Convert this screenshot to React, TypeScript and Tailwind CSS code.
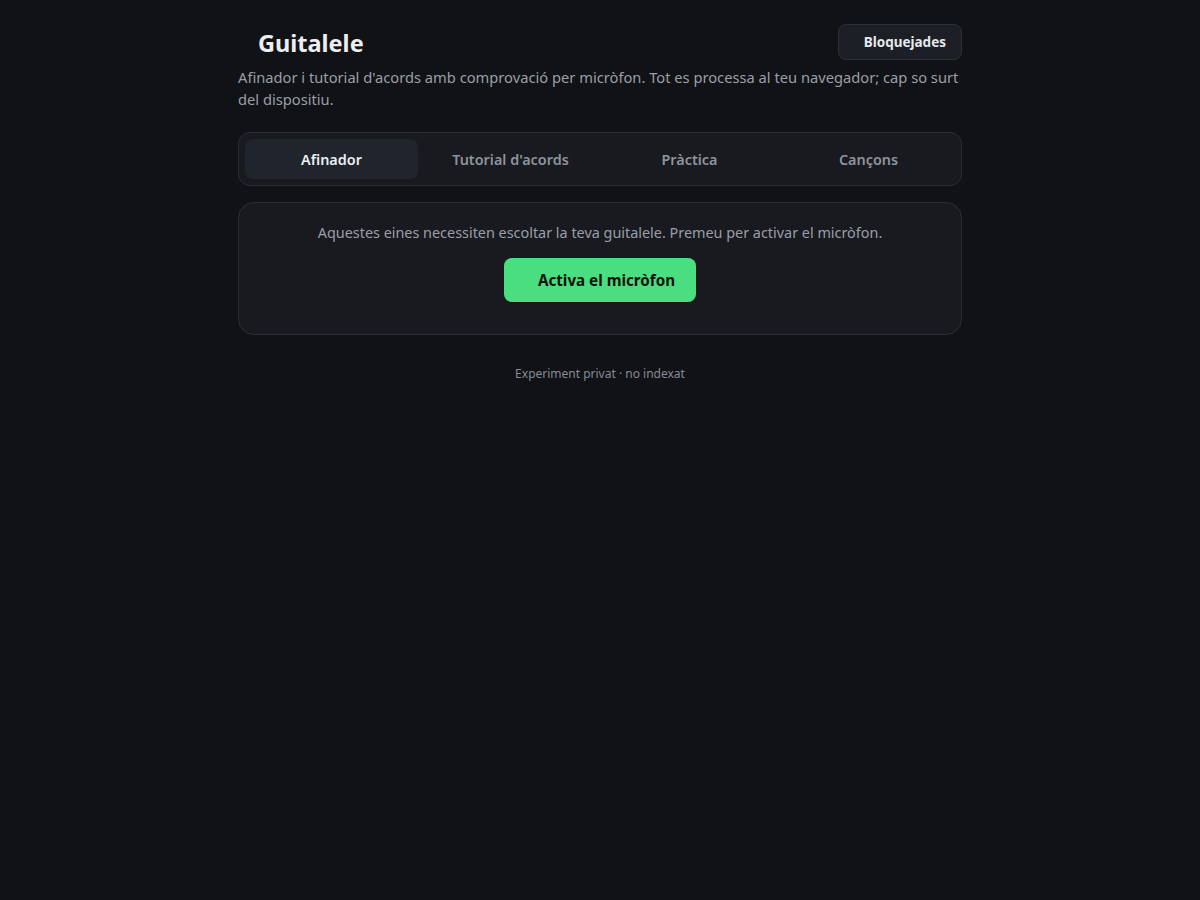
import React, { useState } from "react";

const tabs = ["Afinador", "Tutorial d'acords", "Pràctica", "Cançons"];

export default function App() {
    const [active, setActive] = useState(0);

    return (
        <div
            className="min-h-screen bg-[#111216] text-gray-100"
            style={{ fontFamily: '"Noto Sans", "Open Sans", sans-serif' }}
        >
            <div className="mx-auto w-[724px] pt-6">
                <header className="flex items-center justify-between h-9">
                    <h1 className="mt-[3px] flex items-center text-[23.5px] font-bold text-[#eceef2]">
                        <span className="w-5" />
                        Guitalele
                    </h1>
                    <button className="h-9 flex items-center rounded-lg border border-[#2c3039] bg-[#1c1f26] pl-[25px] pr-[15px] text-[13.5px] font-bold text-[#e6e8ec]">
                        Bloquejades
                    </button>
                </header>
                <p className="mt-1.5 text-[14.7px] leading-[22px] text-[#9a9fa8]">
                    Afinador i tutorial d'acords amb comprovació per micròfon. Tot es processa al teu navegador; cap so surt del dispositiu.
                </p>

                <nav className="mt-[22px] grid grid-cols-4 gap-1.5 rounded-xl border border-[#2a2e36] bg-[#181a20] p-1.5">
                    {tabs.map((t, i) => (
                        <button
                            key={t}
                            onClick={() => setActive(i)}
                            className={`h-10 pt-[2px] rounded-lg text-[14.4px] font-semibold ${
                                i === active ? "bg-[#20242c] text-[#eceef2]" : "text-[#8e939c]"
                            }`}
                        >
                            {t}
                        </button>
                    ))}
                </nav>

                <section className="mt-4 flex flex-col items-center rounded-2xl border border-[#2a2e36] bg-[#181a20] pt-[21px] pb-8">
                    <p className="text-[14.4px] leading-[18px] text-[#9a9fa8]">
                        Aquestes eines necessiten escoltar la teva guitalele. Premeu per activar el micròfon.
                    </p>
                    <button className="mt-4 h-11 w-[192px] rounded-lg bg-[#4ade80] pl-[13px] text-[15.2px] font-bold text-[#07140b]">
                        Activa el micròfon
                    </button>
                </section>

                <footer className="mt-[31px] text-center text-xs text-[#868b94]">
                    Experiment privat · no indexat
                </footer>
            </div>
        </div>
    );
}
